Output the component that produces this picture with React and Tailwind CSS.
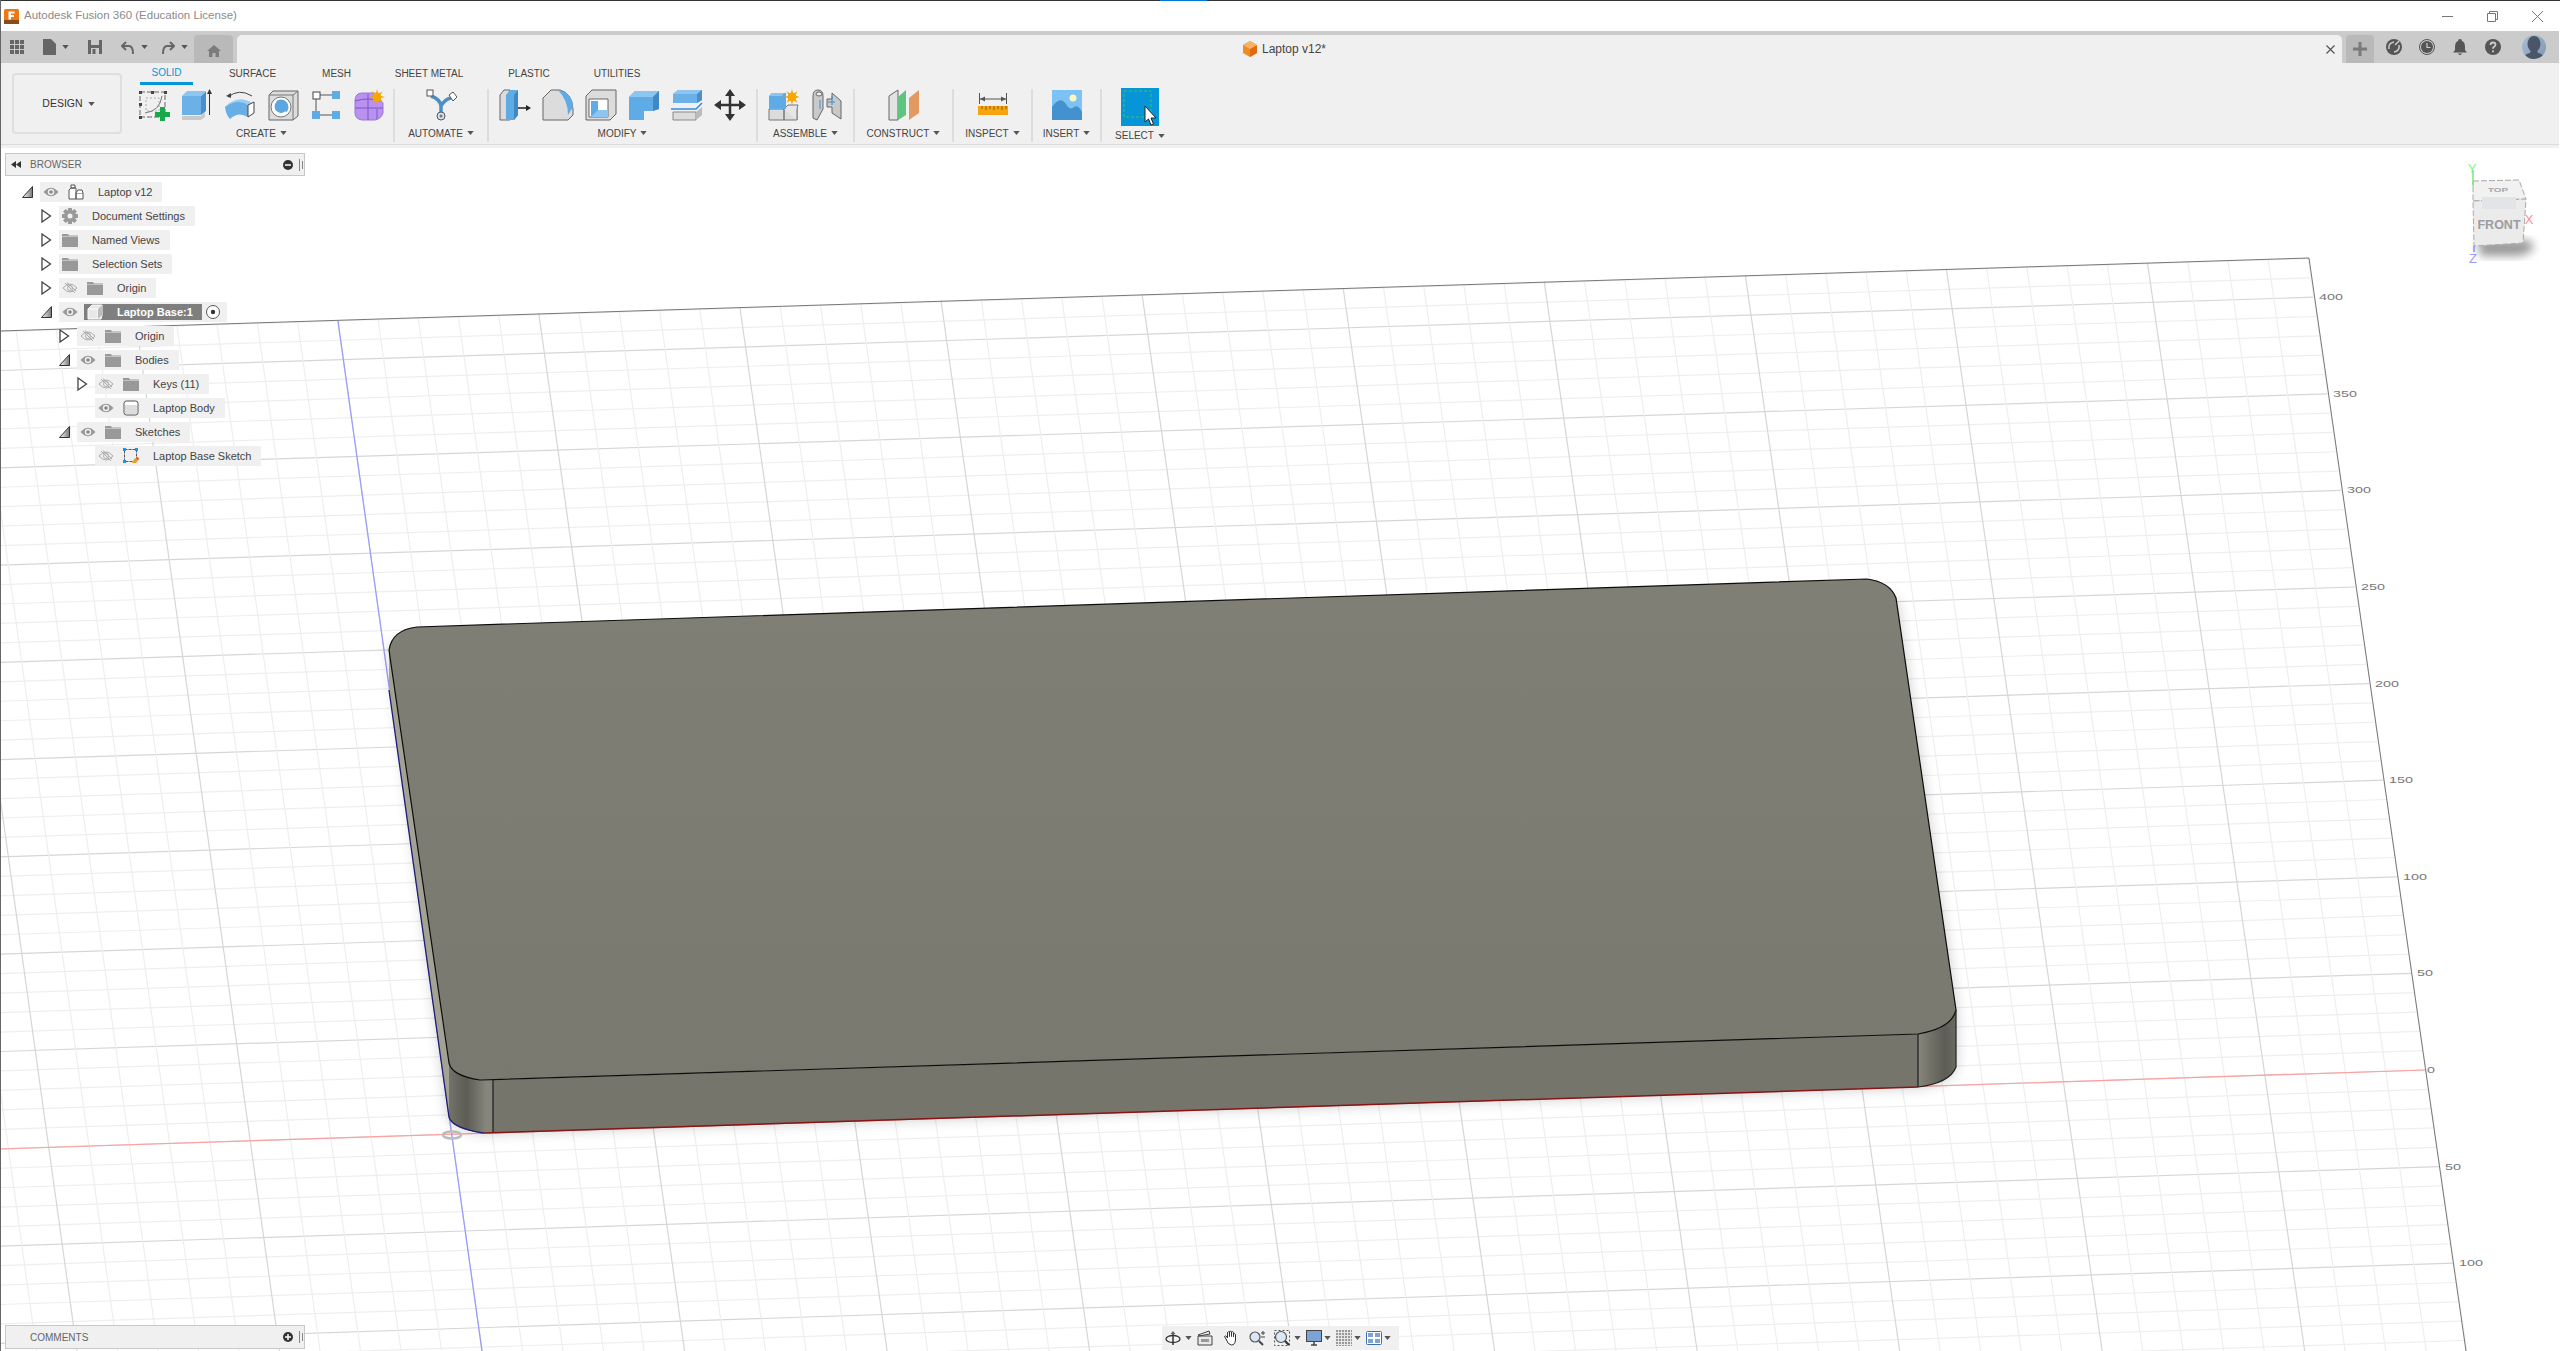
import React from 'react';

const Caret = ({ className = '' }) => (
  <svg viewBox="0 0 8 5" className={`w-[7px] h-[4px] ${className}`}>
    <path d="M0 0H8L4 5Z" fill="#555" />
  </svg>
);

const Star = ({ x, y, r = 7 }) => (
  <g>
    {[0, 45, 90, 135].map(a => (
      <path key={a} d={`M${x - r} ${y}L${x} ${y - 2}L${x + r} ${y}L${x} ${y + 2}Z`} fill="#f5a100" transform={`rotate(${a} ${x} ${y})`} />
    ))}
    <circle cx={x} cy={y} r={r * 0.55} fill="#f7a800" />
  </g>
);

const Tool = ({ children }) => (
  <svg viewBox="0 0 32 32" className="w-8 h-8 shrink-0">{children}</svg>
);

const CreateSketch = () => (
  <Tool>
    <rect x="2" y="3" width="25" height="25" fill="none" stroke="#666" strokeWidth="1" strokeDasharray="5 2" />
    <rect x="8" y="9" width="13" height="13" fill="none" stroke="#aaa" strokeWidth="1" strokeDasharray="2 2" />
    <path d="M7 24Q22 22 24 7" fill="none" stroke="#777" strokeWidth="1" />
    {[[1, 2], [26, 2], [1, 27], [13, 2], [1, 14]].map(([x, y]) => (
      <rect key={`${x}${y}`} x={x} y={y} width="3" height="3" fill="#444" />
    ))}
    <path d="M22 18h5v5h5v5h-5v4h-5v-4h-5v-5h5z" fill="#17a84b" />
  </Tool>
);

const Extrude = () => (
  <Tool>
    <path d="M1 27h19l4-4v5l-4 3H1z" fill="#c9c9c9" />
    <path d="M1 7h19v19H1z" fill="#6bb0e6" />
    <path d="M20 7l5-5v20l-5 4z" fill="#4a8fc7" />
    <path d="M1 7l5-5h19l-5 5z" fill="#8cc5f0" />
    <path d="M28.500 26V3" stroke="#333" strokeWidth="1" />
    <path d="M28.500 0l2.500 5h-5z" fill="#333" />
  </Tool>
);

const Sweep = () => (
  <Tool>
    <path d="M4 8Q15 -1 28 7" fill="none" stroke="#444" strokeWidth="1" />
    <path d="M2 7L7 4L7 9Z" fill="#444" />
    <path d="M1 18Q14 5 28 14V20Q15 13 6 25Z" fill="#9acdf3" />
    <path d="M1 18Q14 9 24 16V28Q14 22 6 30Q2 26 1 18Z" fill="#68aee5" />
    <path d="M24 16l6 -3v11l-6 4z" fill="#fff" stroke="#444" strokeWidth="1" />
  </Tool>
);

const Hole = () => (
  <Tool>
    <path d="M2 6l4-4h25v25l-5 4H2z" fill="#dcdcdc" stroke="#666" strokeWidth="1" />
    <path d="M26 6v25M2 6h24l5-4" fill="none" stroke="#777" strokeWidth="1" />
    <circle cx="14" cy="18" r="10" fill="#fff" stroke="#777" strokeWidth="1" />
    <circle cx="14" cy="18" r="7.500" fill="#5da6e0" />
    <path d="M9 12a7 7 0 0 0 10 11" fill="none" stroke="#fff" strokeWidth="2" />
  </Tool>
);

const Pattern = () => (
  <Tool>
    <path d="M10 6H22M6 10V22M10 26H22" stroke="#555" strokeWidth="1" />
    <rect x="3" y="3" width="7" height="7" fill="#fff" stroke="#444" strokeWidth="1" />
    <rect x="22" y="2" width="8" height="8" fill="#5fabe6" />
    <rect x="2" y="22" width="8" height="8" fill="#5fabe6" />
    <rect x="22" y="22" width="8" height="8" fill="#5fabe6" />
  </Tool>
);

const CreateForm = () => (
  <Tool>
    <path d="M2 12Q2 4 9 4H22L30 14V24Q28 30 22 31H9Q2 30 2 24Z" fill="#b892ee" stroke="#9a75dc" strokeWidth="1" />
    <path d="M2 19H30M15 5V31M2 12Q15 8 28 12" fill="none" stroke="#7d55c7" strokeWidth="1" />
    <path d="M24 20V30" stroke="#9a75dc" strokeWidth="2" />
    <Star x={24} y={8} r={8} />
  </Tool>
);

const Automate = () => (
  <Tool>
    <path d="M16 25V17M16 17Q15 10 6 7M16 17Q20 10 26 9" fill="none" stroke="#4a90c8" strokeWidth="3.500" />
    <rect x="2" y="1" width="6" height="6" fill="#fff" stroke="#555" strokeWidth="1" />
    <path d="M24 6l4-3 4 5-4 4z" fill="#fff" stroke="#555" strokeWidth="1" />
    <circle cx="16" cy="27" r="4" fill="#cfe3f4" stroke="#555" strokeWidth="1" />
    <circle cx="16" cy="27" r="1.500" fill="#777" />
  </Tool>
);

const PressPull = () => (
  <Tool>
    <path d="M1 6l4-5h6v30H1z" fill="#dcdcdc" stroke="#666" strokeWidth="1" />
    <path d="M7 6l4-5h8v25l-4 5H7z" fill="#5fabe6" />
    <path d="M15 6l4-5v25l-4 5z" fill="#3f88c5" />
    <path d="M19 19H28" stroke="#222" strokeWidth="1.500" />
    <path d="M32 19l-5-3v6z" fill="#222" />
  </Tool>
);

const Fillet = () => (
  <Tool>
    <path d="M1 9L9 1H18Q30 4 31 20V26L26 31H1Z" fill="#dcdcdc" stroke="#666" strokeWidth="1" />
    <path d="M16 1Q30 3 31 18L26 26Q26 11 16 1Z" fill="#5fabe6" />
  </Tool>
);

const Shell = () => (
  <Tool>
    <path d="M1 7l6-6h24v24l-6 6H1z" fill="#dcdcdc" stroke="#666" strokeWidth="1" />
    <path d="M4 10h19v18H4z" fill="#fff" stroke="#666" strokeWidth="1" />
    <path d="M6 12h7v9h10v7H6z" fill="#5fabe6" />
    <path d="M13 21h10v7H6z" fill="#8cc5f0" />
  </Tool>
);

const Combine = () => (
  <Tool>
    <path d="M1 8L7 2H31V20L24 22H16V31H1Z" fill="#5fabe6" />
    <path d="M1 8L7 2H31L25 8Z" fill="#8cc5f0" />
    <path d="M25 8L31 2V20L25 22Z" fill="#3f88c5" />
  </Tool>
);

const Split = () => (
  <Tool>
    <path d="M2 5l5-4h24v10l-5 3H2z" fill="#6bb0e6" />
    <path d="M2 5l5-4h24l-5 4z" fill="#8cc5f0" />
    <path d="M26 5l5-4v10l-5 3z" fill="#4a8fc7" />
    <path d="M0 20H25L31 14" fill="none" stroke="#2e8de0" strokeWidth="1.500" />
    <path d="M2 23H25V31H2z" fill="#dcdcdc" stroke="#888" strokeWidth="1" />
    <path d="M25 23l6-5v8l-6 5z" fill="#bbb" />
  </Tool>
);

const Move = () => (
  <Tool>
    <path d="M16 3V29M3 16H29" stroke="#333" strokeWidth="2.500" />
    <path d="M16 0l5 7H11zM16 32l5-7H11zM0 16l7-5v10zM32 16l-7-5v10z" fill="#333" />
  </Tool>
);

const NewComponent = () => (
  <Tool>
    <path d="M1 20h15v11H1zM16 20h13v11H16z" fill="#dcdcdc" stroke="#777" strokeWidth="1" />
    <path d="M16 20l4-4h10l-1 4v11" fill="#e6e6e6" stroke="#777" strokeWidth="1" />
    <path d="M1 7l3-3h14v16H1z" fill="#5fabe6" />
    <path d="M1 7l3-3h12l-2 3z" fill="#8cc5f0" />
    <Star x={24} y={8} r={8} />
  </Tool>
);

const Joint = () => (
  <Tool>
    <path d="M2 29V7Q2 1 7 1Q12 1 12 7V20L6 31Z" fill="#c9c9c9" stroke="#666" strokeWidth="1" />
    <path d="M16 18V10H21V4L30 12V30L21 24V18Z" fill="#c9c9c9" stroke="#666" strokeWidth="1" />
    <path d="M9 11V20M21 7V16M17 13H24" stroke="#3b8fd8" strokeWidth="1" fill="none" />
    <ellipse cx="8" cy="5" rx="3" ry="2" fill="#eee" stroke="#666" strokeWidth="1" />
  </Tool>
);

const Plane = () => (
  <Tool>
    <path d="M1 7L10 1V31H1Z" fill="#e3e3e3" stroke="#666" strokeWidth="1" />
    <path d="M10 8L18 1V26L10 31Z" fill="#5fc47f" />
    <path d="M21 9L31 1V24L21 31Z" fill="#e39a62" />
  </Tool>
);

const Measure = () => (
  <Tool>
    <path d="M3 10H29" stroke="#555" strokeWidth="1" />
    <path d="M2.500 4V15M29.500 4V15" stroke="#555" strokeWidth="1" />
    <path d="M3 10l5-2.500v5zM29 10l-5-2.500v5z" fill="#555" />
    <rect x="1" y="17" width="30" height="9" fill="#f6a50f" />
    <path d="M5 17v3M9 17v4M13 17v3M17 17v4M21 17v3M25 17v4M29 17v3" stroke="#8a5a00" strokeWidth="1" />
  </Tool>
);

const InsertImage = () => (
  <Tool>
    <rect x="1" y="1" width="30" height="30" fill="#7cc2f5" />
    <circle cx="22" cy="9" r="3.500" fill="#fbf7c2" />
    <path d="M1 31V18Q9 6 15 15Q19 22 23 18Q27 15 31 23V31Z" fill="#4392cf" />
  </Tool>
);

const Divider = ({ title, w, children }) => (
  <div className={`${w} h-[53px] flex flex-col items-center`}>
    <div className="h-9 flex items-center gap-[11px]">{children}</div>
    <div className="mt-[3px] h-[20px] flex items-center gap-[4px] text-[10px] text-[#444]">
      {title}
      <Caret />
    </div>
  </div>
);

const Eye = ({ off }) => (
  <svg viewBox="0 0 16 12" className="w-4 h-3 shrink-0">
    {off ? (
      <g fill="none" stroke="#aaa" strokeWidth="1">
        <path d="M1 6Q8 -2 15 6Q8 14 1 6Z" />
        <circle cx="8" cy="6" r="2.500" />
        <path d="M3 1L13 11M5 0.500L14 9" />
      </g>
    ) : (
      <g>
        <path d="M0.500 6Q8 -2.500 15.500 6Q8 14.500 0.500 6Z" fill="#999" />
        <circle cx="8" cy="6" r="3.200" fill="#f0f0f0" />
        <circle cx="8" cy="6" r="1.800" fill="#888" />
      </g>
    )}
  </svg>
);

const Folder = () => (
  <svg viewBox="0 0 16 14" className="w-4 h-[14px] shrink-0">
    <path d="M0 1H6L7 2.500H16V14H0Z" fill="#999" />
    <path d="M0 3.500H16" stroke="#ddd" strokeWidth=".6" />
  </svg>
);

const Gear = () => (
  <svg viewBox="0 0 16 16" className="w-4 h-4 shrink-0">
    <g fill="#999">
      {[0, 45, 90, 135].map(a => (
        <rect key={a} x="6" y="0" width="4" height="16" rx=".5" transform={`rotate(${a} 8 8)`} />
      ))}
      <circle cx="8" cy="8" r="6" />
    </g>
    <circle cx="8" cy="8" r="2.500" fill="#f0f0f0" />
  </svg>
);

const CompIcon = () => (
  <svg viewBox="0 0 16 16" className="w-4 h-4 shrink-0">
    <path d="M1 6l2-2h5v11H1zM8 9h7v6H8zM3 1h4v3H3z" fill="#fff" stroke="#555" strokeWidth="1" />
    <path d="M8 9l2-3h4l1 3" fill="#fff" stroke="#555" strokeWidth="1" />
  </svg>
);

const BaseIcon = () => (
  <svg viewBox="0 0 16 16" className="w-4 h-4 shrink-0">
    <path d="M1 5l4-4h10v10l-1 4H1z" fill="#e8e8e8" stroke="#fff" strokeWidth="1" />
    <path d="M1 5H11V15M11 5l4-4" fill="none" stroke="#fff" strokeWidth="1" />
    <path d="M11 5l4-4v10l-4 4z" fill="#bbb" />
  </svg>
);

const BodyIcon = () => (
  <svg viewBox="0 0 16 16" className="w-4 h-4 shrink-0">
    <rect x="1" y="1" width="14" height="14" rx="2.500" fill="#fff" stroke="#555" strokeWidth="1" />
    <path d="M2 5H14V13Q14 14 13 14H3Q2 14 2 13Z" fill="#ddd" />
  </svg>
);

const SketchIcon = () => (
  <svg viewBox="0 0 16 16" className="w-4 h-4 shrink-0">
    <rect x="1.500" y="1.500" width="12" height="12" fill="none" stroke="#555" strokeWidth="1" strokeDasharray="3 1" />
    {[[0, 0], [12, 0], [0, 12]].map(([x, y]) => (
      <rect key={`${x}${y}`} x={x} y={y} width="3" height="3" fill="#2b8fe0" />
    ))}
    <path d="M9 15l2-4 4-2 1 2-3 4z" fill="#f0a020" />
    <path d="M14 9l2 2-1 1-2-2z" fill="#e0403c" />
  </svg>
);

const Arrow = ({ open }) =>
  open ? (
    <svg viewBox="0 0 11 12" className="w-[11px] h-3 shrink-0">
      <defs>
        <linearGradient id="tri" x1="0" x2="1" y1="0" y2="0">
          <stop offset="0" stopColor="#fff" />
          <stop offset="1" stopColor="#777" />
        </linearGradient>
      </defs>
      <path d="M0.500 11.500H10.500V0.500Z" fill="url(#tri)" stroke="#333" strokeWidth="1" />
    </svg>
  ) : (
    <svg viewBox="0 0 11 14" className="w-[11px] h-[14px] shrink-0">
      <path d="M1 1L9.500 7L1 13Z" fill="#fff" stroke="#444" strokeWidth="1.300" />
    </svg>
  );

const treeRows = [
  { id: 'doc', indent: 'pl-[22px]', open: true, eye: 'on', icon: <CompIcon />, label: 'Laptop v12' },
  { id: 'settings', indent: 'pl-[41px]', icon: <Gear />, label: 'Document Settings' },
  { id: 'views', indent: 'pl-[41px]', icon: <Folder />, label: 'Named Views' },
  { id: 'sets', indent: 'pl-[41px]', icon: <Folder />, label: 'Selection Sets' },
  { id: 'origin', indent: 'pl-[41px]', eye: 'off', icon: <Folder />, label: 'Origin' },
  { id: 'base', indent: 'pl-[41px]', open: true, eye: 'on', active: true, label: 'Laptop Base:1' },
  { id: 'origin2', indent: 'pl-[59px]', eye: 'off', icon: <Folder />, label: 'Origin' },
  { id: 'bodies', indent: 'pl-[59px]', open: true, eye: 'on', icon: <Folder />, label: 'Bodies' },
  { id: 'keys', indent: 'pl-[77px]', eye: 'off', icon: <Folder />, label: 'Keys (11)' },
  { id: 'body', indent: 'pl-[77px]', noArrow: true, eye: 'on', icon: <BodyIcon />, label: 'Laptop Body' },
  { id: 'sketches', indent: 'pl-[59px]', open: true, eye: 'on', icon: <Folder />, label: 'Sketches' },
  { id: 'sketch', indent: 'pl-[77px]', noArrow: true, eye: 'off', icon: <SketchIcon />, label: 'Laptop Base Sketch' },
];

function TreeRow({ row }) {
  return (
    <div className={`h-6 flex items-center ${row.indent}`}>
      {row.noArrow ? <span className="w-[11px] shrink-0" /> : <Arrow open={row.open} />}
      <div className="ml-[7px] h-5 flex items-center pl-[3px] pr-[10px] bg-[#f0f0f0] text-[11px] text-[#444]">
        {row.eye && <Eye off={row.eye === 'off'} />}
        {row.active ? (
          <>
            <div className="ml-[6px] w-[118px] h-4 flex items-center pl-[3px] bg-[#7f7f7f] text-white font-bold">
              <BaseIcon />
              <span className="ml-[14px] whitespace-nowrap">{row.label}</span>
            </div>
            <svg viewBox="0 0 16 16" className="w-4 h-4 ml-[3px] -mr-[4px]">
              <circle cx="8" cy="8" r="6.500" fill="#fff" stroke="#555" strokeWidth="1" />
              <circle cx="8" cy="8" r="2.200" fill="#333" />
            </svg>
          </>
        ) : (
          <>
            {row.eye && <span className="w-[9px]" />}
            {row.icon}
            <span className="ml-[14px] whitespace-nowrap">{row.label}</span>
          </>
        )}
      </div>
    </div>
  );
}

const PanelBars = () => (
  <svg viewBox="0 0 4 12" className="w-[4px] h-3 ml-[6px]">
    <path d="M0.500 0V12M3.500 2V10" stroke="#888" strokeWidth="1" />
  </svg>
);

const rightEdge = y => 2425 + (y - 1070) * 0.145;
const rows = Array.from({ length: 100 }, (_, i) => i - 42);
const cols = Array.from({ length: 62 }, (_, i) => i - 12);
const scaleMarks = [
  [-40, '400'], [-35, '350'], [-30, '300'], [-25, '250'], [-20, '200'], [-15, '150'],
  [-10, '100'], [-5, '50'], [0, '0'], [5, '50'], [10, '100'],
];

function Scene() {
  return (
    <svg viewBox="0 148 2560 1203" className="absolute inset-0 w-full h-full">
      <defs>
        <filter id="soft" x="-5%" y="-5%" width="110%" height="110%">
          <feGaussianBlur stdDeviation="7" />
        </filter>
        <filter id="softer" x="-30%" y="-30%" width="160%" height="160%">
          <feGaussianBlur stdDeviation="5" />
        </filter>
        <linearGradient id="topFace" x1="0" x2="0" y1="0" y2="1">
          <stop offset="0" stopColor="#807f75" />
          <stop offset="1" stopColor="#7a796f" />
        </linearGradient>
        <linearGradient id="cornerL" gradientUnits="userSpaceOnUse" x1="449" x2="493" y1="0" y2="0">
          <stop offset="0" stopColor="#74736a" />
          <stop offset=".4" stopColor="#5d5c55" />
          <stop offset=".85" stopColor="#87867c" />
          <stop offset="1" stopColor="#85847a" />
        </linearGradient>
        <linearGradient id="cornerR" gradientUnits="userSpaceOnUse" x1="1918" x2="1956" y1="0" y2="0">
          <stop offset="0" stopColor="#87867c" />
          <stop offset=".7" stopColor="#5d5c55" />
          <stop offset="1" stopColor="#6c6b61" />
        </linearGradient>
      </defs>

      {rows.map(v => {
        const y = 1070 + v * 19.32;
        const x = rightEdge(y);
        const slope = 0.0325 + v * 0.00002;
        const major = v % 5 === 0;
        return (
          <line key={v} x1={0} y1={y + x * slope} x2={x} y2={y} stroke={major ? '#d6d6d6' : '#eeeeee'} strokeWidth="1.200" />
        );
      })}
      {cols.map(u => {
        const major = u % 5 === 0;
        const slope = 0.14 + u * 0.0001;
        const x0 = 338 + u * 40.4;
        const top = 320 - u * 40.4 * 0.0317;
        return (
          <line key={u} x1={x0 + (top - 322) * slope} y1={top} x2={x0 + (1351 - 322) * slope} y2={1351} stroke={major ? '#d6d6d6' : '#eeeeee'} strokeWidth="1.200" />
        );
      })}
      <line x1={0} y1={331} x2={2309} y2={258} stroke="#777" strokeWidth="1" />
      <line x1={2309} y1={258} x2={2466} y2={1351} stroke="#777" strokeWidth="1" />
      <line x1={0} y1={1149} x2={2425} y2={1070} stroke="#ffa0a0" strokeWidth="1.200" />
      <line x1={338} y1={321} x2={482} y2={1351} stroke="#9a9aff" strokeWidth="1.200" />

      {scaleMarks.map(([v, t]) => {
        const y = 1070 + v * 19.32;
        return (
          <text key={v} transform={`translate(${rightEdge(y) + (v === 0 ? 2 : 6)} ${y + 3}) scale(1.6 0.95)`} fontSize="9" fill="#777" fontFamily="'Liberation Sans', sans-serif">
            {t}
          </text>
        );
      })}

      <path d="M389 645L449 1117Q452 1128 483 1133L1918 1087Q1950 1083 1956 1067V1010L1896 598Z" fill="#000" opacity=".22" filter="url(#soft)" />

      <ellipse cx="452" cy="1135" rx="9" ry="3.500" fill="none" stroke="#bcbcbc" strokeWidth="2.500" />

      <path d="M389 645V690L449 1117V1063Z" fill="#a3a293" />
      <path d="M449 1063Q452 1076 480 1080L493 1080V1133H483Q452 1129 449 1117Z" fill="url(#cornerL)" />
      <path d="M493 1080L1918 1034V1087L493 1133Z" fill="#76756b" />
      <path d="M1918 1034Q1950 1028 1956 1010V1067Q1950 1083 1918 1087Z" fill="url(#cornerR)" />
      <path d="M417 627L1867 579Q1890 582 1896 598L1956 1010Q1952 1028 1918 1034L480 1080Q452 1076 449 1063L389 650Q392 630 417 627Z" fill="url(#topFace)" stroke="#0c0c0c" strokeWidth="1.200" />
      <path d="M493 1080V1133M1918 1034V1087" stroke="#1c1c1c" strokeWidth="1.200" />
      <path d="M1956 1010V1067Q1950 1083 1918 1087" fill="none" stroke="#222" strokeWidth="1.200" />
      <path d="M389 690L449 1117Q452 1128 483 1133" fill="none" stroke="#1d1d7a" strokeWidth="1.300" />
      <path d="M483 1133L1918 1087" stroke="#8a1414" strokeWidth="1.500" />

      <path d="M2478 240H2530L2534 250L2520 256H2480Z" fill="#000" opacity=".4" filter="url(#softer)" />
      <path d="M2473 181L2519 180L2526 199L2473 201Z" fill="#f1f1f1" stroke="#aaa" strokeWidth="1" strokeDasharray="6 2" />
      <path d="M2473 201L2526 199L2523 243L2474 246Z" fill="#ebebeb" stroke="#aaa" strokeWidth="1" strokeDasharray="6 2" />
      <rect x="2482" y="197" width="34" height="12" fill="#e3e4e8" />
      <text transform="translate(2498 192) scale(1.4 0.7)" textAnchor="middle" fontSize="7" fontWeight="700" fill="#a4a4a8" fontFamily="'Liberation Sans', sans-serif">TOP</text>
      <text x="2499" y="229" textAnchor="middle" fontSize="12.500" fontWeight="700" fill="#9c9ca2" fontFamily="'Liberation Sans', sans-serif">FRONT</text>
      <text x="2472" y="173" textAnchor="middle" fontSize="13" fill="#88f088" fontFamily="'Liberation Sans', sans-serif">Y</text>
      <text x="2529" y="224" textAnchor="middle" fontSize="13" fill="#ff8c8c" fontFamily="'Liberation Sans', sans-serif">X</text>
      <text x="2473" y="263" textAnchor="middle" fontSize="13" fill="#9a9aff" fontFamily="'Liberation Sans', sans-serif">Z</text>
      <path d="M2473 170V186" stroke="#78e878" strokeWidth="1.500" />
      <path d="M2474 246V252" stroke="#8a8aff" strokeWidth="1.500" />
    </svg>
  );
}

const Nav = ({ children, className = 'w-4 h-4' }) => (
  <svg viewBox="0 0 16 16" className={`${className} shrink-0`}>{children}</svg>
);

export default function App() {
  return (
    <div className="relative flex flex-col h-screen w-screen overflow-hidden bg-white font-['Liberation_Sans',Arial,sans-serif]">
      <div className="absolute left-0 inset-y-0 w-px bg-[#666] z-10" />

      {/* title bar */}
      <div className="relative h-[31px] flex items-center border-t border-[#333] bg-white">
        <div className="absolute left-[1160px] -top-px w-[47px] h-px bg-[#0078d7]" />
        <svg viewBox="0 0 15 15" className="w-[15px] h-[15px] ml-[4px]">
          <rect width="15" height="15" rx="1.500" fill="#f07814" />
          <rect y="11" width="15" height="4" fill="#8a4a1c" />
          <path d="M4.500 2.500H10.500V4.500H7V6H10V8H7V10.500H4.500Z" fill="#fff" />
        </svg>
        <span className="ml-[5px] text-[11.500px] text-[#8a8a8a]">Autodesk Fusion 360 (Education License)</span>
        <div className="ml-auto mr-[17px] flex items-center gap-[34px]">
          <svg viewBox="0 0 11 11" className="w-[11px] h-[11px]"><path d="M0 5.500H11" stroke="#777" strokeWidth="1" /></svg>
          <svg viewBox="0 0 11 11" className="w-[11px] h-[11px]"><path d="M2.500 2.500V0.500H10.500V8.500H8.500M0.500 2.500H8.500V10.500H0.500Z" fill="none" stroke="#777" strokeWidth="1" /></svg>
          <svg viewBox="0 0 11 11" className="w-[11px] h-[11px]"><path d="M0 0L11 11M11 0L0 11" stroke="#777" strokeWidth="1" /></svg>
        </div>
      </div>

      {/* tab strip */}
      <div className="h-[32px] flex items-center bg-[#cbcbcb] mr-px">
        <svg viewBox="0 0 14 14" className="w-[14px] h-[14px] ml-[10px]">
          {[0, 5, 10].map(y => [0, 5, 10].map(x => <rect key={`${x}${y}`} x={x} y={y} width="4" height="4" fill="#666" />))}
        </svg>
        <svg viewBox="0 0 13 16" className="w-[13px] h-4 ml-[19px]"><path d="M0 0H8L13 5V16H0Z" fill="#666" /></svg>
        <Caret className="ml-[6px]" />
        <svg viewBox="0 0 14 14" className="w-[14px] h-[14px] ml-[19px]">
          <path d="M0 0H14V14H0Z" fill="#666" />
          <rect x="3" y="0" width="8" height="5" fill="#cbcbcb" />
          <rect x="3" y="8" width="8" height="6" fill="#cbcbcb" />
          <rect x="4.500" y="9" width="3" height="5" fill="#666" />
        </svg>
        <svg viewBox="0 0 14 14" className="w-[14px] h-[14px] ml-[19px]">
          <path d="M5 2L1 6L5 10M1 6H8Q12 6 12 14" fill="none" stroke="#666" strokeWidth="2" />
        </svg>
        <Caret className="ml-[6px]" />
        <svg viewBox="0 0 14 14" className="w-[14px] h-[14px] ml-[13px]">
          <path d="M9 2L13 6L9 10M13 6H6Q2 6 2 14" fill="none" stroke="#666" strokeWidth="2" />
        </svg>
        <Caret className="ml-[6px]" />
        <div className="self-end ml-[6px] w-[39px] h-[28px] flex items-center justify-center rounded-t bg-[#b9b9b9]">
          <svg viewBox="0 0 14 12" className="w-[14px] h-3 mt-[4px]"><path d="M7 0L14 6H12V12H8.500V8H5.500V12H2V6H0Z" fill="#7c7c7c" /></svg>
        </div>
        <div className="self-end ml-[4px] w-[2105px] h-[28px] flex items-center justify-center pr-[10px] rounded-t-[5px] bg-[#f0f0f0] relative">
          <svg viewBox="0 0 14 16" className="w-[14px] h-4 mr-[5px] -mt-[1px]">
            <path d="M7 0L14 4V12L7 16L0 12V4Z" fill="#f08a24" />
            <path d="M7 8L14 4V12L7 16Z" fill="#e06a10" />
            <path d="M7 0L14 4L7 8L0 4Z" fill="#f8b266" />
          </svg>
          <span className="text-[12px] text-[#444] -mt-[1px]">Laptop v12*</span>
          <svg viewBox="0 0 9 9" className="absolute right-[7px] top-[10px] w-[9px] h-[9px]"><path d="M0.500 0.500L8.500 8.500M8.500 0.500L0.500 8.500" stroke="#555" strokeWidth="1.200" /></svg>
        </div>
        <div className="self-end ml-[4px] w-[28px] h-[28px] flex items-center justify-center rounded-t bg-[#b9b9b9]">
          <svg viewBox="0 0 14 14" className="w-[14px] h-[14px]"><path d="M7 0V14M0 7H14" stroke="#7a7a7a" strokeWidth="3" /></svg>
        </div>
        <svg viewBox="0 0 16 16" className="w-4 h-4 ml-[12px]">
          <circle cx="8" cy="8" r="8" fill="#555" />
          <path d="M3 10Q2 4 8 3M13 6Q14 12 8 13" fill="none" stroke="#cbcbcb" strokeWidth="1.500" />
          <path d="M9 6L13 2" stroke="#cbcbcb" strokeWidth="1.500" />
        </svg>
        <svg viewBox="0 0 16 16" className="w-4 h-4 ml-[17px]">
          <circle cx="8" cy="8" r="7.500" fill="none" stroke="#555" strokeWidth="1" />
          <circle cx="8" cy="8" r="6" fill="#555" />
          <path d="M8 4V8.500H11.500" fill="none" stroke="#cbcbcb" strokeWidth="1.200" />
        </svg>
        <svg viewBox="0 0 16 16" className="w-4 h-4 ml-[17px]">
          <path d="M8 0Q10 0 10 2Q13 3 13 8V11L15 13.500H1L3 11V8Q3 3 6 2Q6 0 8 0ZM6 14.500H10Q9 16 8 16Q7 16 6 14.500Z" fill="#555" />
        </svg>
        <svg viewBox="0 0 16 16" className="w-4 h-4 ml-[17px]">
          <circle cx="8" cy="8" r="8" fill="#555" />
          <path d="M5.500 6Q5.500 3.500 8 3.500Q10.500 3.500 10.500 5.800Q10.500 7 9 7.800Q8 8.400 8 9.800" fill="none" stroke="#cbcbcb" strokeWidth="1.800" />
          <circle cx="8" cy="12.300" r="1.100" fill="#cbcbcb" />
        </svg>
        <svg viewBox="0 0 24 24" className="w-6 h-6 ml-[21px]">
          <defs>
            <linearGradient id="ava" x1="0" x2="1" y1="0" y2="1">
              <stop offset="0" stopColor="#a9c0d8" />
              <stop offset="1" stopColor="#7e94b0" />
            </linearGradient>
            <clipPath id="avaClip"><circle cx="12" cy="12" r="12" /></clipPath>
          </defs>
          <circle cx="12" cy="12" r="12" fill="url(#ava)" />
          <g clipPath="url(#avaClip)" fill="#4a5668">
            <ellipse cx="12" cy="9" rx="6.500" ry="8" />
            <path d="M9 15H15L16 18Q22 19 22 24H2Q2 19 8 18Z" />
          </g>
        </svg>
      </div>

      {/* toolbar */}
      <div className="h-[85px] bg-[#f0f0f0] mr-px">
        <div className="h-[82px] flex border-b border-[#dcdcdc]">
          <div className="ml-[12px] mt-[10px] w-[110px] h-[61px] flex items-center justify-center gap-[5px] pl-[3px] rounded border-2 border-[#dfdfdf] text-[10.500px] text-[#333]">
            DESIGN
            <Caret />
          </div>
          <div className="ml-[8px] flex flex-col">
            <div className="flex h-[22px] text-[10px] text-[#444]">
              <div className="ml-[10px] w-[53px] flex items-center justify-center border-b-[3px] border-[#0696d7] text-[#0696d7]">SOLID</div>
              <div className="ml-[33px] w-[53px] flex items-center justify-center pb-[2px]">SURFACE</div>
              <div className="ml-[31px] w-[53px] flex items-center justify-center pb-[2px]">MESH</div>
              <div className="ml-[26px] w-[80px] flex items-center justify-center pb-[2px]">SHEET METAL</div>
              <div className="ml-[34px] w-[52px] flex items-center justify-center pb-[2px]">PLASTIC</div>
              <div className="ml-[36px] w-[52px] flex items-center justify-center pb-[2px]">UTILITIES</div>
            </div>
            <div className="mt-[4px] flex divide-x-2 divide-[#dddddd]">
              <Divider title="CREATE" w="w-[265px]">
                <CreateSketch /><Extrude /><Sweep /><Hole /><Pattern /><CreateForm />
              </Divider>
              <Divider title="AUTOMATE" w="w-[94px]"><Automate /></Divider>
              <Divider title="MODIFY" w="w-[269px]">
                <PressPull /><Fillet /><Shell /><Combine /><Split /><Move />
              </Divider>
              <Divider title="ASSEMBLE" w="w-[97px]"><NewComponent /><Joint /></Divider>
              <Divider title="CONSTRUCT" w="w-[99px]"><Plane /></Divider>
              <Divider title="INSPECT" w="w-[79px]"><Measure /></Divider>
              <Divider title="INSERT" w="w-[69px]"><InsertImage /></Divider>
              <Divider title="SELECT" w="w-[76px]">
                <svg viewBox="0 0 38 38" className="w-[38px] h-[38px] -my-px shrink-0">
                  <rect width="38" height="38" fill="#0696d7" />
                  <rect x="3" y="3" width="27" height="26" fill="none" stroke="#3fc06a" strokeWidth="1" strokeDasharray="3 2" />
                  <path d="M24 18V34L27.500 31L30 37L32.500 36L30 30H35Z" fill="#fff" stroke="#222" strokeWidth="1" />
                </svg>
              </Divider>
            </div>
          </div>
        </div>
      </div>

      {/* viewport */}
      <div className="relative flex-1 overflow-hidden">
        <Scene />

        <div className="absolute left-[5px] top-[5px] w-[300px]">
          <div className="h-[23px] flex items-center border border-[#c8c8c8] bg-[#f0f0f0] pl-[5px] pr-[1px] text-[10px] text-[#666]">
            <svg viewBox="0 0 10 7" className="w-[10px] h-[7px]"><path d="M5 0V7L0 3.500ZM10 0V7L5 3.500Z" fill="#333" /></svg>
            <span className="ml-[9px]">BROWSER</span>
            <svg viewBox="0 0 10 10" className="w-[10px] h-[10px] ml-auto"><circle cx="5" cy="5" r="5" fill="#333" /><path d="M2 5H8" stroke="#fff" strokeWidth="1.500" /></svg>
            <PanelBars />
          </div>
          <div className="mt-[4px] -ml-[5px]">
            {treeRows.map(row => <TreeRow key={row.id} row={row} />)}
          </div>
        </div>

        <div className="absolute left-[5px] bottom-[2px] w-[300px] h-[24px] flex items-center border border-[#c8c8c8] bg-[#f0f0f0] pl-[24px] pr-[1px] text-[10px] text-[#666]">
          COMMENTS
          <svg viewBox="0 0 10 10" className="w-[10px] h-[10px] ml-auto"><circle cx="5" cy="5" r="5" fill="#333" /><path d="M2 5H8M5 2V8" stroke="#fff" strokeWidth="1.500" /></svg>
          <PanelBars />
        </div>

        <div className="absolute left-[1162px] bottom-px w-[237px] h-[24px] flex items-center pl-[3px] bg-[#f0f0f0]">
          <Nav><path d="M8 1L5.500 4H7V15H9V4H10.500Z" fill="#666" /><ellipse cx="8" cy="9" rx="7" ry="3.500" fill="none" stroke="#333" strokeWidth="1.300" /></Nav>
          <Caret className="ml-[4px]" />
          <Nav className="w-4 h-4 ml-[5px]"><path d="M1 5L12 1L13 4L2 6ZM1 6H15V15H1Z" fill="#e8e8e8" stroke="#444" strokeWidth="1" /><rect x="4" y="9" width="8" height="3" fill="#999" /></Nav>
          <Nav className="w-4 h-4 ml-[10px]"><path d="M3 9L1.500 6.500Q2.500 5 4 7L4.500 8V2.500Q6 1 6.500 2.500V6.500V1.500Q8 0.500 8.500 2V6.500V2Q10 1 10.500 2.500V7V4Q12 3 12.500 4.500V10Q12 15 8.500 15Q5 15 3 9Z" fill="#fff" stroke="#333" strokeWidth="1" /></Nav>
          <Nav className="w-4 h-4 ml-[10px]"><circle cx="6" cy="7" r="5" fill="#d9e6f5" stroke="#555" strokeWidth="1.200" /><path d="M10 11L14 15" stroke="#444" strokeWidth="2" /><path d="M12 3H16M14 1V5M12 7H16" stroke="#444" strokeWidth="1" /></Nav>
          <Nav className="w-4 h-4 ml-[9px]"><rect x="0.500" y="0.500" width="15" height="15" fill="none" stroke="#555" strokeWidth="1" strokeDasharray="2 2" /><circle cx="7" cy="7" r="5.500" fill="#dce8f5" stroke="#555" strokeWidth="1.200" /><path d="M11 11L15 15" stroke="#333" strokeWidth="2.200" /></Nav>
          <Caret className="ml-[4px]" />
          <Nav className="w-4 h-4 ml-[5px]"><rect x="0.500" y="0.500" width="15" height="11" fill="#7ba3d6" stroke="#444" strokeWidth="1" /><path d="M5 15H11M8 12V15" stroke="#444" strokeWidth="1.500" /></Nav>
          <Caret className="ml-[2px]" />
          <Nav className="w-4 h-4 ml-[5px]"><rect width="16" height="16" fill="#999" /><path d="M2.500 0V16M5.500 0V16M8.500 0V16M11.500 0V16M14.500 0V16M0 2.500H16M0 5.500H16M0 8.500H16M0 11.500H16M0 14.500H16" stroke="#e6e6e6" strokeWidth="1" /></Nav>
          <Caret className="ml-[2px]" />
          <Nav className="w-4 h-4 ml-[5px]"><rect x="0.500" y="1.500" width="15" height="13" rx="1" fill="#fff" stroke="#3d6ea8" strokeWidth="1" /><rect x="2" y="3" width="5" height="4" fill="#7ba3d6" /><rect x="9" y="3" width="5" height="4" fill="#7ba3d6" /><rect x="2" y="9" width="5" height="4" fill="#7ba3d6" /><rect x="9" y="9" width="5" height="4" fill="#7ba3d6" /></Nav>
          <Caret className="ml-[2px]" />
        </div>
      </div>
    </div>
  );
}
